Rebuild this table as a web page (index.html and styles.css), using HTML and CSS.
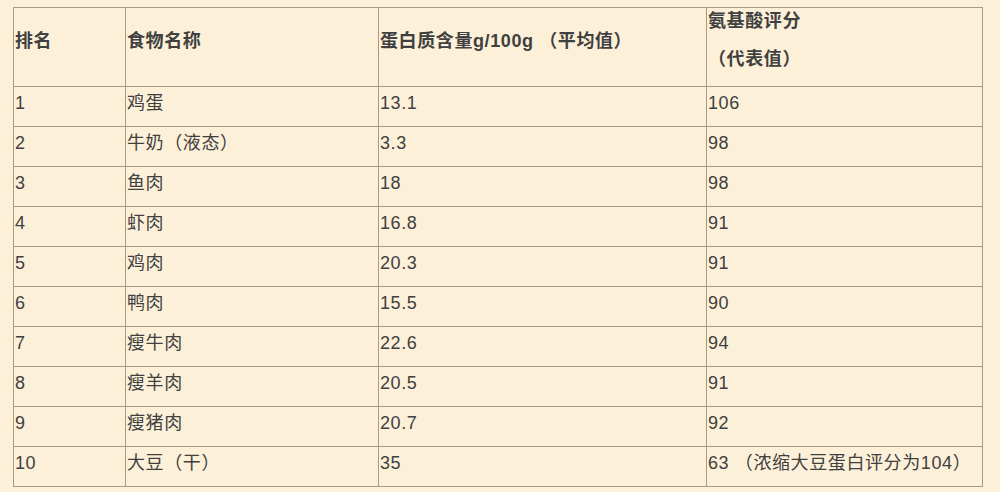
FILE: index.html
```html
<!DOCTYPE html>
<html lang="zh">
<head>
<meta charset="utf-8">
<link rel="stylesheet" href="styles.css">
</head>
<body>
<table class="rank">
  <colgroup>
    <col class="c1"><col class="c2"><col class="c3"><col class="c4">
  </colgroup>
  <thead>
    <tr>
      <th>排名</th>
      <th>食物名称</th>
      <th>蛋白质含量g/100g （平均值）</th>
      <th class="two"><div>氨基酸评分</div><div class="second">（代表值）</div></th>
    </tr>
  </thead>
  <tbody>
    <tr><td>1</td><td>鸡蛋</td><td>13.1</td><td>106</td></tr>
    <tr><td>2</td><td>牛奶（液态）</td><td>3.3</td><td>98</td></tr>
    <tr><td>3</td><td>鱼肉</td><td>18</td><td>98</td></tr>
    <tr><td>4</td><td>虾肉</td><td>16.8</td><td>91</td></tr>
    <tr><td>5</td><td>鸡肉</td><td>20.3</td><td>91</td></tr>
    <tr><td>6</td><td>鸭肉</td><td>15.5</td><td>90</td></tr>
    <tr><td>7</td><td>瘦牛肉</td><td>22.6</td><td>94</td></tr>
    <tr><td>8</td><td>瘦羊肉</td><td>20.5</td><td>91</td></tr>
    <tr><td>9</td><td>瘦猪肉</td><td>20.7</td><td>92</td></tr>
    <tr><td>10</td><td>大豆（干）</td><td>35</td><td>63 （浓缩大豆蛋白评分为104）</td></tr>
  </tbody>
</table>
</body>
</html>
```
FILE: styles.css
```css
html, body {
  margin: 0;
  padding: 0;
  background: #fdf0d9;
}
body {
  padding: 7px 0 0 13px;
  font-family: "Liberation Sans", "Noto Sans CJK SC", sans-serif;
  font-size: 18px;
  letter-spacing: 0.6px;
  color: #404040;
}
.rank {
  border-collapse: collapse;
  table-layout: fixed;
  width: 969px;
}
.c1 { width: 112px; }
.c2 { width: 253px; }
.c3 { width: 328px; }
.c4 { width: 276px; }
.rank th, .rank td {
  border: 1px solid #a89a85;
  text-align: left;
  padding: 0 1px;
  white-space: nowrap;
}
.rank th {
  height: 66px;
  padding-bottom: 12px;
  vertical-align: middle;
  line-height: 27px;
  font-weight: bold;
}
.rank th.two {
  vertical-align: top;
}
.rank th .second {
  margin-top: 11px;
}
.rank td {
  height: 36px;
  padding-top: 3px;
  vertical-align: top;
  line-height: 27px;
}
```
